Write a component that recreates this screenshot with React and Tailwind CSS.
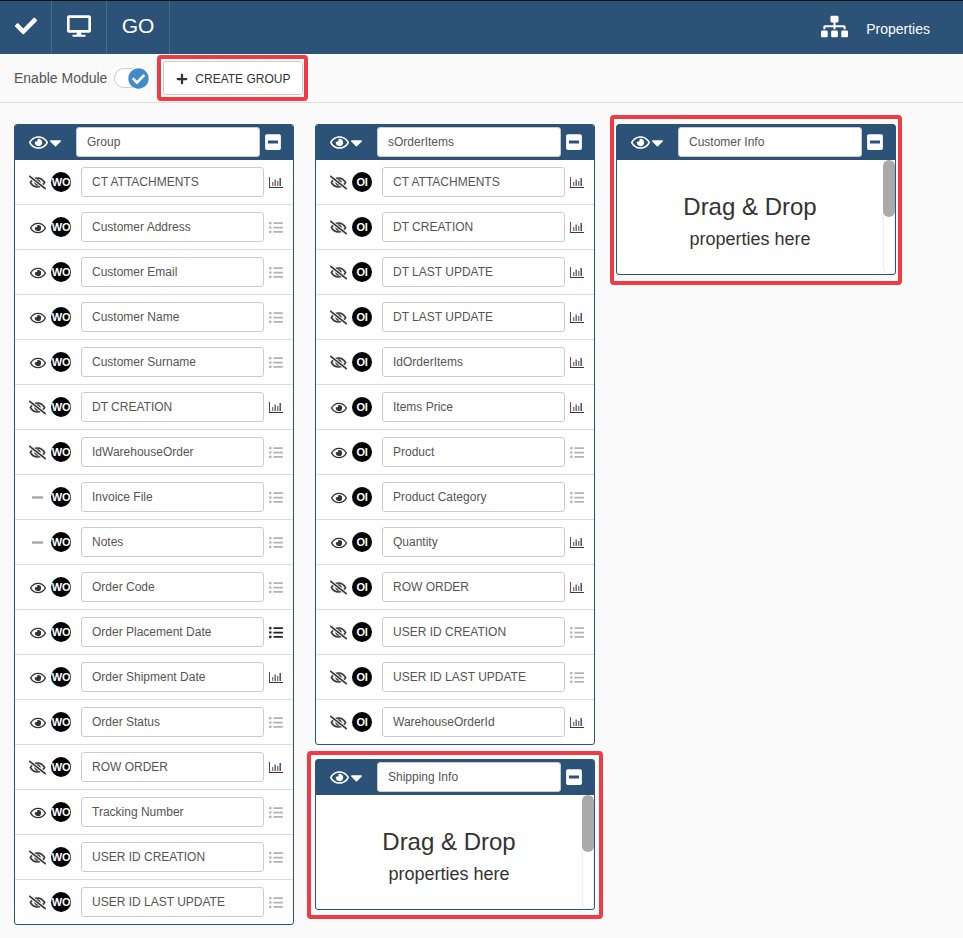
import React from "react";
import { FaCheck, FaDesktop, FaSitemap, FaPlus, FaCheckCircle, FaMinusSquare, FaCaretDown, FaListUl, FaRegEye, FaRegEyeSlash, FaMinus } from "react-icons/fa";

const Chart = ({ tone }) => {
  const axis = tone === "oi" ? "#8a3b32" : "#4a4a6a";
  return (
    <svg width="14" height="11" viewBox="0 0 14 11" className="shrink-0">
      <rect x="0" y="0" width="1" height="11" fill={axis} />
      <rect x="0" y="10" width="14" height="1" fill="#333a48" />
      <rect x="3" y="5" width="1.4" height="4" fill="#b8683c" />
      <rect x="5.5" y="2.5" width="1.4" height="6.5" fill="#3d6a9c" />
      <rect x="8" y="4" width="1.4" height="5" fill="#b8683c" />
      <rect x="10.5" y="1" width="1.4" height="8" fill="#3a3f80" />
    </svg>
  );
};

const wo = [
  ["CT ATTACHMENTS", "slash", "chart"],
  ["Customer Address", "eye", "list"],
  ["Customer Email", "eye", "list"],
  ["Customer Name", "eye", "list"],
  ["Customer Surname", "eye", "list"],
  ["DT CREATION", "slash", "chart"],
  ["IdWarehouseOrder", "slash", "list"],
  ["Invoice File", "minus", "list"],
  ["Notes", "minus", "list"],
  ["Order Code", "eye", "list"],
  ["Order Placement Date", "eye", "dark"],
  ["Order Shipment Date", "eye", "chart"],
  ["Order Status", "eye", "list"],
  ["ROW ORDER", "slash", "chart"],
  ["Tracking Number", "eye", "list"],
  ["USER ID CREATION", "slash", "list"],
  ["USER ID LAST UPDATE", "slash", "list"],
];

const oi = [
  ["CT ATTACHMENTS", "slash", "chart"],
  ["DT CREATION", "slash", "chart"],
  ["DT LAST UPDATE", "slash", "chart"],
  ["DT LAST UPDATE", "slash", "chart"],
  ["IdOrderItems", "slash", "chart"],
  ["Items Price", "eye", "chart"],
  ["Product", "eye", "list"],
  ["Product Category", "eye", "list"],
  ["Quantity", "eye", "chart"],
  ["ROW ORDER", "slash", "chart"],
  ["USER ID CREATION", "slash", "list"],
  ["USER ID LAST UPDATE", "slash", "list"],
  ["WarehouseOrderId", "slash", "chart"],
];

const Row = ({ label, vis, kind, badge, tone, last }) => (
  <div className={`flex items-center pl-[14px] pr-[10px] ${last ? "h-[44px]" : "h-[45px] border-b border-[#dddddd]"}`}>
    <div className="mt-[1px] flex w-[17px] justify-center text-[#333333]">
      {vis === "eye" && <FaRegEye className="text-[16px]" />}
      {vis === "slash" && <FaRegEyeSlash className="text-[17px]" stroke="currentColor" strokeWidth="18" />}
      {vis === "minus" && <FaMinus className="text-[13px] text-[#aaaaaa]" />}
    </div>
    <div className="ml-[5px] flex h-[20px] w-[20px] shrink-0 items-center justify-center rounded-full bg-black text-[11px] font-bold leading-none tracking-[-0.3px] text-white">
      {badge}
    </div>
    <div className="ml-[10px] flex h-[30px] w-[183px] shrink-0 items-center rounded-[3px] border border-[#cccccc] bg-white pl-[10px] text-[12px] text-[#555555]">
      {label}
    </div>
    <div className="ml-[5px] flex w-[14px] justify-center">
      {kind === "chart" && <Chart tone={tone} />}
      {kind === "list" && <FaListUl className="text-[15px] text-[#b3b3b3]" />}
      {kind === "dark" && <FaListUl className="text-[15px] text-[#222222]" />}
    </div>
  </div>
);

const Head = ({ title }) => (
  <div className="flex h-[35px] items-center bg-[#2c5278] pb-[1px] pl-[14px]">
    <FaRegEye className="text-[19px] text-white" />
    <FaCaretDown className="-ml-[2px] text-[19px] text-white" />
    <div className="ml-[11px] flex h-[30px] w-[184px] shrink-0 items-center rounded-[3px] border border-[#cccccc] bg-white pl-[10px] text-[12px] text-[#555555]">
      {title}
    </div>
    <FaMinusSquare className="ml-[4px] text-[18px] text-white" />
  </div>
);

const Frame = ({ inset }) => (
  <div className={`pointer-events-none absolute rounded-[4px] border-[4px] border-[#ee3b45] ${inset}`} />
);

const EmptyPanel = ({ title, frame }) => (
  <div className="relative w-[280px] rounded-[3px] border border-[#2c5278] bg-white">
    <Head title={title} />
    <div className="relative flex h-[114px] flex-col items-center overflow-hidden pr-[12px] text-[#333333]">
      <div className="mt-[31px] text-[24px] leading-[32px]">Drag &amp; Drop</div>
      <div className="mt-[3px] text-[18px] leading-[26px]">properties here</div>
      <div className="absolute right-0 top-0 h-full w-[12px] rounded-[6px] border border-[#eeeeee]" />
      <div className="absolute right-0 top-0 h-[57px] w-[12px] rounded-[6px] bg-[#aaaaaa]" />
    </div>
    <Frame inset={frame} />
  </div>
);

const Panel = ({ title, rows, badge, tone }) => (
  <div className="w-[280px] overflow-hidden rounded-[3px] border border-[#2c5278] bg-white">
    <Head title={title} />
    {rows.map((r, i) => (
      <Row key={i} label={r[0]} vis={r[1]} kind={r[2]} badge={badge} tone={tone} last={i === rows.length - 1} />
    ))}
  </div>
);

export default function App() {
  return (
    <div className="h-[938px] w-[963px] overflow-hidden bg-[#fafafa] font-['Liberation_Sans',Arial,sans-serif]">
      <header className="flex h-[54px] items-stretch border-t border-[#111111] bg-[#2c5278] text-white">
        <div className="flex w-[52px] items-center justify-center border-r border-[#47698c] pb-[3px] pl-[1px]">
          <FaCheck className="text-[22px]" />
        </div>
        <div className="flex w-[55px] items-center justify-center border-r border-[#47698c] pb-[3px]">
          <FaDesktop className="text-[24px]" />
        </div>
        <div className="flex w-[63px] items-center justify-center border-r border-[#47698c] pb-[3px] text-[21px]">GO</div>
        <div className="ml-auto flex items-center pr-[33px]">
          <FaSitemap className="mb-[3px] text-[27px]" />
          <span className="ml-[18px] pt-[4px] text-[14px]">Properties</span>
        </div>
      </header>
      <div className="flex h-[49px] items-center border-b border-[#dddddd] pl-[14px]">
        <span className="text-[14px] text-[#555555]">Enable Module</span>
        <div className="relative ml-[7px] h-[20px] w-[35px] rounded-full border border-[#cccccc] bg-white">
          <span className="absolute -right-px -top-[2px] flex h-[22px] w-[22px] items-center justify-center rounded-full bg-white">
            <FaCheckCircle className="text-[21px] text-[#428bca]" />
          </span>
        </div>
        <div className="relative ml-[14px]">
          <button className="flex h-[34px] w-[140px] items-center justify-center rounded-[3px] border border-[#cccccc] bg-white pt-[1px] text-[12px] text-[#333333]">
            <FaPlus className="mr-[7px] text-[12px]" />
            CREATE GROUP
          </button>
          <Frame inset="-left-[6px] -right-[5px] -inset-y-[6px]" />
        </div>
      </div>
      <main className="flex items-start gap-[21px] pl-[14px] pt-[21px]">
        <Panel title="Group" rows={wo} badge="WO" tone="wo" />
        <div className="flex flex-col gap-[14px]">
          <Panel title="sOrderItems" rows={oi} badge="OI" tone="oi" />
          <EmptyPanel title="Shipping Info" frame="-inset-x-[9px] -top-[9px] -bottom-[10px]" />
        </div>
        <EmptyPanel title="Customer Info" frame="-inset-x-[7px] -top-[10px] -bottom-[11px]" />
      </main>
    </div>
  );
}
